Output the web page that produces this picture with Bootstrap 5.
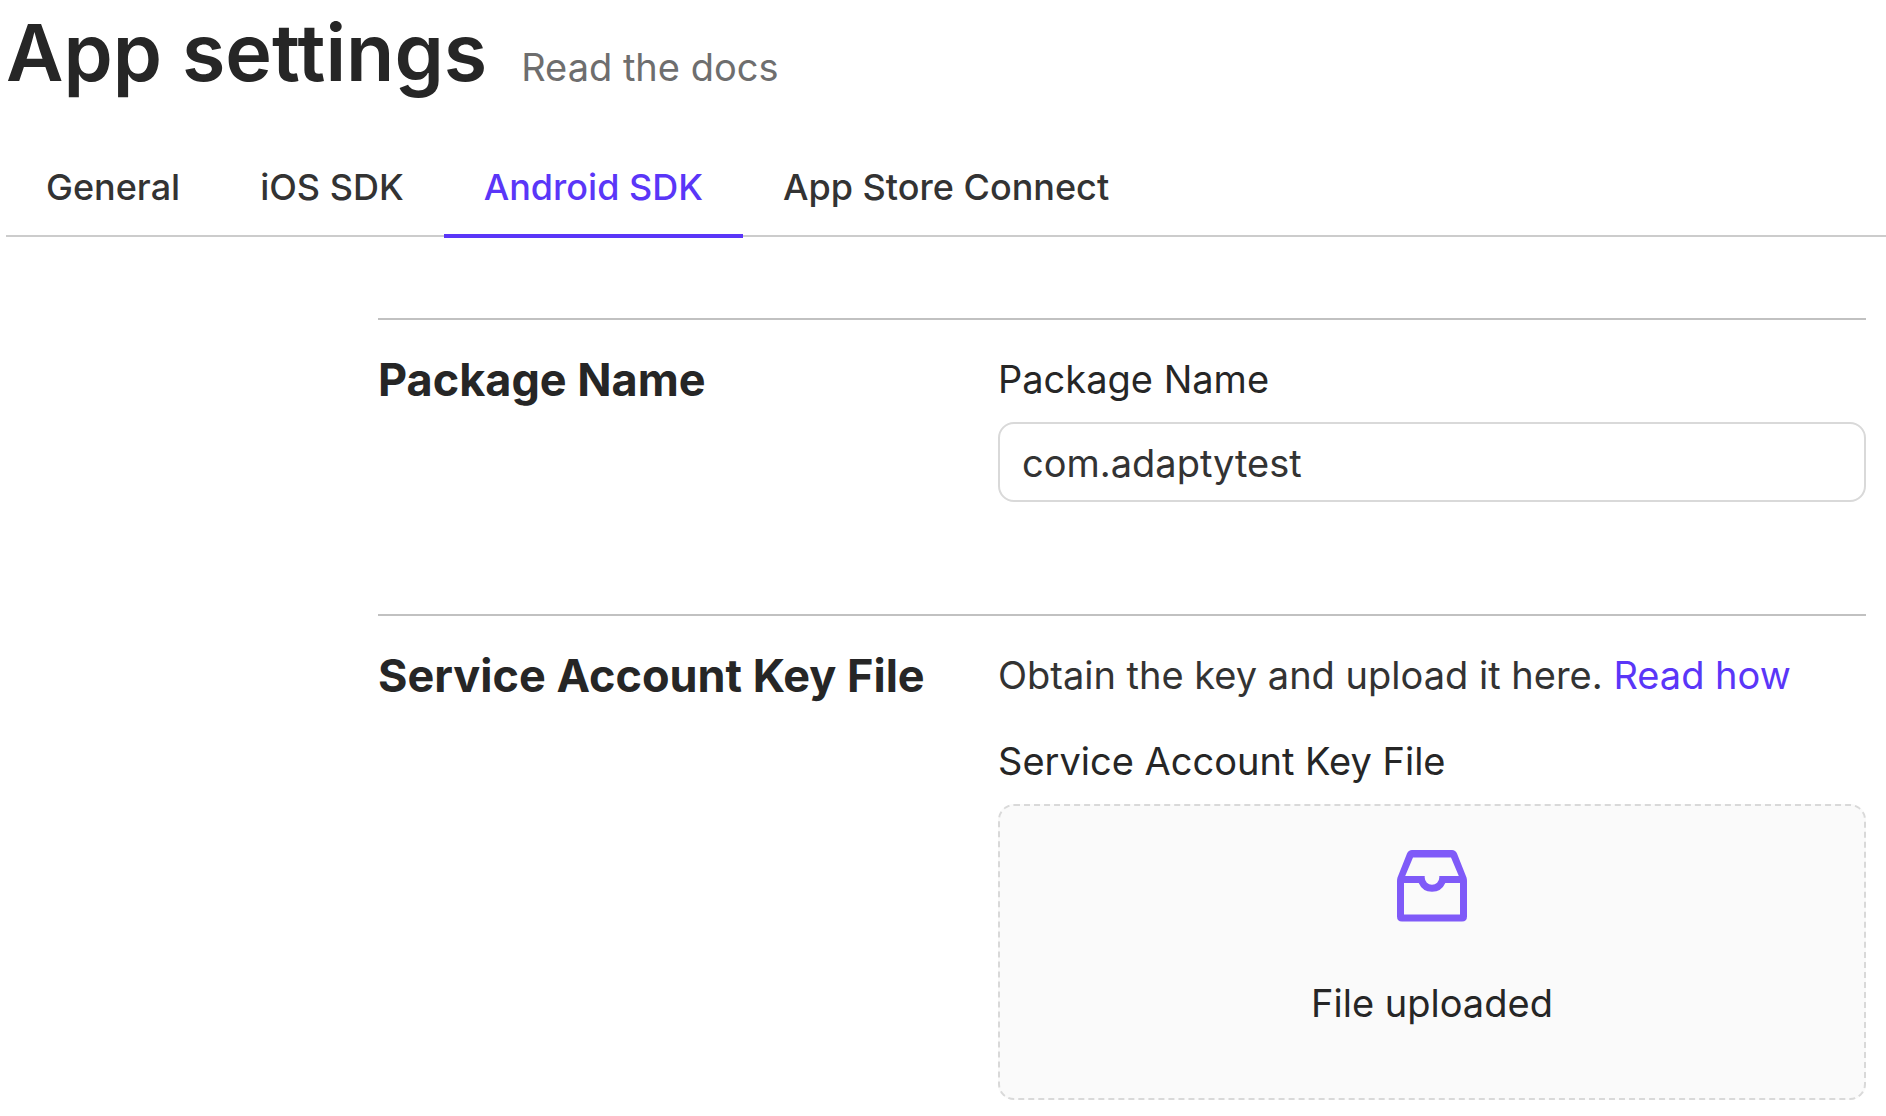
<!DOCTYPE html>
<html lang="en">
<head>
<meta charset="utf-8">
<meta name="viewport" content="width=device-width, initial-scale=1">
<title>App settings</title>
<link href="https://cdn.jsdelivr.net/npm/bootstrap@5.3.0/dist/css/bootstrap.min.css" rel="stylesheet">
<style>
  :root { --accent: #5a36f8; --ink: #262626; --ink-soft: #333; }
  body { font-family: Inter, "Open Sans", sans-serif; font-size: 38px; line-height: 54px; color: var(--ink); background: #fff; }
  a { color: var(--accent); text-decoration: none; }
  .page { padding-left: 6px; }
  .page-title { font-size: 79px; line-height: 104px; font-weight: 600; margin: 0; }
  .page-head { gap: 34px; margin-bottom: 36px; }
  .docs-link { color: #6e6e6e; }
  .sdk-tabs { border: 0; box-shadow: inset 0 -2px #ccc; margin-bottom: 81px; font-size: 36px; }
  .sdk-tabs .nav-link { padding: 20px 40px; border: 0; border-bottom: 4px solid transparent; border-radius: 0; color: var(--ink-soft); font-weight: 500; background: none; }
  .sdk-tabs .nav-link.active { color: var(--accent); border-bottom-color: var(--accent); background: none; }
  .settings { padding-right: 20px; }
  .settings-col { width: 80%; }
  .setting { border-top: 2px solid #c1c1c1; padding-top: 32px; padding-bottom: 112px; }
  .setting:last-child { padding-bottom: 14px; }
  .setting-title { font-size: 45px; line-height: 56px; font-weight: 700; margin: 0; }
  .field-label { display: block; margin-bottom: 16px; }
  .field-input { height: 80px; padding: 2px 22px 0; border: 2px solid #d9d9d9; border-radius: 16px; font-size: 38px; color: var(--ink-soft); }
  .hint { margin-bottom: 32px; color: var(--ink-soft); }
  .drop-zone { gap: 54px; padding: 44px 16px 68px; border: 2px dashed #d9d9d9; border-radius: 16px; background: #fafafa; cursor: pointer; }
</style>
<script src="https://cdn.jsdelivr.net/npm/bootstrap@5.3.0/dist/js/bootstrap.bundle.min.js" defer></script>
</head>
<body>
<main class="page">
  <header class="page-head d-flex flex-wrap align-items-baseline">
    <h1 class="page-title">App settings</h1>
    <a class="docs-link" href="#">Read the docs</a>
  </header>
  <nav class="nav nav-tabs sdk-tabs" aria-label="Settings sections">
    <a class="nav-link" href="#">General</a>
    <a class="nav-link" href="#">iOS SDK</a>
    <a class="nav-link active" aria-current="page" href="#">Android SDK</a>
    <a class="nav-link" href="#">App Store Connect</a>
  </nav>
  <div class="settings d-flex justify-content-end">
    <div class="settings-col">
      <section class="setting row g-0">
        <div class="col-5"><h2 class="setting-title">Package Name</h2></div>
        <div class="col-7">
          <label class="field-label" for="package-name">Package Name</label>
          <input class="form-control field-input" id="package-name" type="text" value="com.adaptytest">
        </div>
      </section>
      <section class="setting row g-0">
        <div class="col-5"><h2 class="setting-title">Service Account Key File</h2></div>
        <div class="col-7">
          <p class="hint">Obtain the key and upload it here. <a href="#">Read how</a></p>
          <label class="field-label" for="key-file">Service Account Key File</label>
          <label class="drop-zone d-flex flex-column align-items-center" for="key-file">
            <svg width="70" height="72" viewBox="0 0 70 72" fill="#7f5af8" fill-rule="evenodd" aria-hidden="true">
              <path d="M15 0H55Q58.500 0 60 3.500L69.500 27.500Q70 29 70 31V66.500Q70 71.500 65 71.500H5Q0 71.500 0 66.500V31Q0 29 .5 27.500L10 3.500Q11.500 0 15 0ZM16 7.500 8.200 26H27.700V27.500A7.300 7.300 0 0 0 42.300 27.500V26H61.800L54 7.500ZM7 33V64.500H63V33H48.300A14.500 14.500 0 0 1 21.700 33Z"/>
            </svg>
            <span>File uploaded</span>
          </label>
          <input class="visually-hidden" id="key-file" type="file">
        </div>
      </section>
    </div>
  </div>
</main>
</body>
</html>
